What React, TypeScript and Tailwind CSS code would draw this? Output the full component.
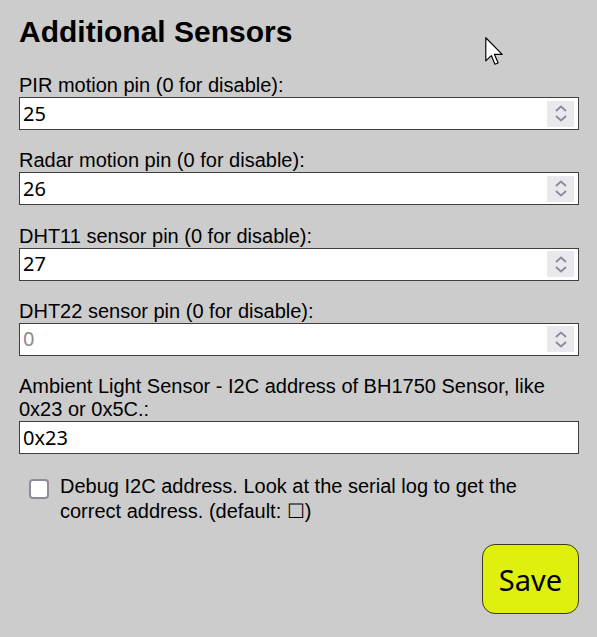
const fields = [
  { label: "PIR motion pin (0 for disable):", value: "25", spin: true },
  { label: "Radar motion pin (0 for disable):", value: "26", spin: true },
  { label: "DHT11 sensor pin (0 for disable):", value: "27", spin: true },
  { label: "DHT22 sensor pin (0 for disable):", value: "0", spin: true, muted: true },
  {
    label: "Ambient Light Sensor - I2C address of BH1750 Sensor, like 0x23 or 0x5C.:",
    value: "0x23",
    spin: false,
  },
];

const Spinner = () => (
  <div className="mr-[4px] flex h-[26px] w-[27px] flex-col items-center justify-center gap-[3px] bg-[#e9e9ed]">
    <svg width="12" height="7" viewBox="0 0 12 7" fill="none">
      <path d="M1 6 L6 1.5 L11 6" stroke="#8c8a96" strokeWidth="1.8" />
    </svg>
    <svg width="12" height="7" viewBox="0 0 12 7" fill="none">
      <path d="M1 1 L6 5.5 L11 1" stroke="#8c8a96" strokeWidth="1.8" />
    </svg>
  </div>
);

export default function App() {
  return (
    <main className="relative min-h-screen bg-[#cccccc] pl-[19px] pr-[18px] pt-[15px] font-['Liberation_Sans',Arial,sans-serif] text-black">
      <h2 className="text-[30px] font-bold leading-[34px]">Additional Sensors</h2>

      <div className="mt-[25px] flex flex-col gap-[19.33px]">
        {fields.map((f) => (
          <div key={f.label} className="flex flex-col">
            <label className="text-[20px] leading-[23px]">{f.label}</label>
            <div className="flex h-[33px] items-center border border-[#3f3f3f] bg-white">
              <span
                className={`flex-1 pl-[3px] font-['Noto_Sans',sans-serif] text-[20px] leading-none ${
                  f.muted ? "text-[#8a8a8a]" : "text-black"
                }`}
              >
                {f.value}
              </span>
              {f.spin && <Spinner />}
            </div>
          </div>
        ))}
      </div>

      <div className="mt-[20px] flex flex-row gap-[11px] pl-[10px]">
        <div className="mt-[5px] h-[20px] w-[20px] shrink-0 rounded-[4px] border-2 border-[#8f8b99] bg-white" />
        <p className="text-[20px] leading-[25px]">
          Debug I2C address. Look at the serial log to get the correct address. (default: ☐)
        </p>
      </div>

      <div className="mt-[20px] flex flex-row justify-end">
        <button className="h-[70px] w-[97px] rounded-[13px] border border-[#3a3a20] bg-[#dff00f] font-['Noto_Sans',sans-serif] text-[29px] text-black">
          Save
        </button>
      </div>

      <svg
        className="absolute left-[485px] top-[37px]"
        width="19"
        height="29"
        viewBox="0 0 13 20"
      >
        <path
          d="M0.5 0.5 L0.5 16.5 L4.3 12.8 L6.8 18.8 L9 17.9 L6.5 12 L11.8 12 Z"
          fill="white"
          stroke="black"
          strokeWidth="0.8"
          strokeLinejoin="round"
        />
      </svg>
    </main>
  );
}
